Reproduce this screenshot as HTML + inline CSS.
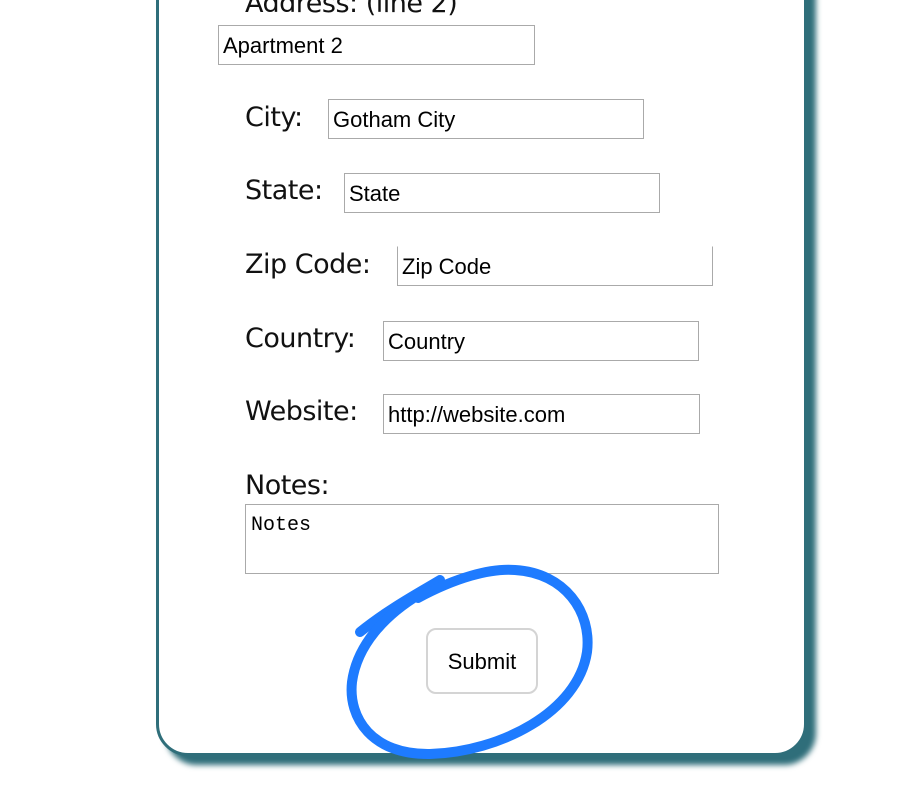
<!DOCTYPE html>
<html><head><meta charset="utf-8"><style>
html,body{margin:0;padding:0;background:#fff;width:900px;height:790px;overflow:hidden;position:relative}
.card{position:absolute;left:156px;top:-60px;width:645px;height:810px;border:3px solid #2f6e7a;border-radius:32px;background:#fff;box-shadow:9px 9px 6px #2f6e7a}
.l{position:absolute;font-family:"DejaVu Sans","Liberation Sans",sans-serif;font-size:27px;color:#111;letter-spacing:-0.5px;line-height:1}
.i{position:absolute;height:38px;width:310px;border:1px solid #aaa;font-family:"Liberation Sans",sans-serif;font-size:22px;line-height:40px;padding-left:4px;box-sizing:content-box;color:#000}
.ta{position:absolute;left:245px;top:504px;width:474px;height:70px;border:1px solid #aaa;font-family:"Liberation Mono","DejaVu Sans Mono",monospace;font-size:20px;padding:9px 0 0 5px;box-sizing:border-box}
.btn{position:absolute;left:426px;top:628px;width:108px;height:62px;border:2px solid #d4d4d4;border-radius:10px;font-family:"Liberation Sans",sans-serif;font-size:22px;text-align:center;line-height:64px}
</style></head><body>
<div class="card"></div>
<div class="l" style="left:245px;top:-10px">Address: (line 2)</div>
<div class="i" style="left:218px;top:25px;width:311px">Apartment 2</div>
<div class="l" style="left:245px;top:104px">City:</div>
<div class="i" style="left:328px;top:99px">Gotham City</div>
<div class="l" style="left:245px;top:177px">State:</div>
<div class="i" style="left:344px;top:173px">State</div>
<div class="l" style="left:245px;top:251px">Zip Code:</div>
<div class="i" style="left:397px;top:246px;border-top-color:#fff">Zip Code</div>
<div class="l" style="left:245px;top:325px">Country:</div>
<div class="i" style="left:383px;top:321px">Country</div>
<div class="l" style="left:245px;top:398px">Website:</div>
<div class="i" style="left:383px;top:394px;width:311px">http://website.com</div>
<div class="l" style="left:245px;top:472px">Notes:</div>
<div class="ta">Notes</div>
<div class="btn">Submit</div>
<svg width="900" height="790" style="position:absolute;left:0;top:0" fill="none" stroke="#1e7bff" stroke-width="10" stroke-linecap="round">
<path d="M360,632 C390,608 420,592 440,580"/>
<path d="M418,598 C455,578 490,568 515,570 C565,573 592,612 587,652 C578,712 500,752 430,754 C372,755 348,718 352,682 C357,645 385,615 420,594"/>
</svg>
</body></html>
